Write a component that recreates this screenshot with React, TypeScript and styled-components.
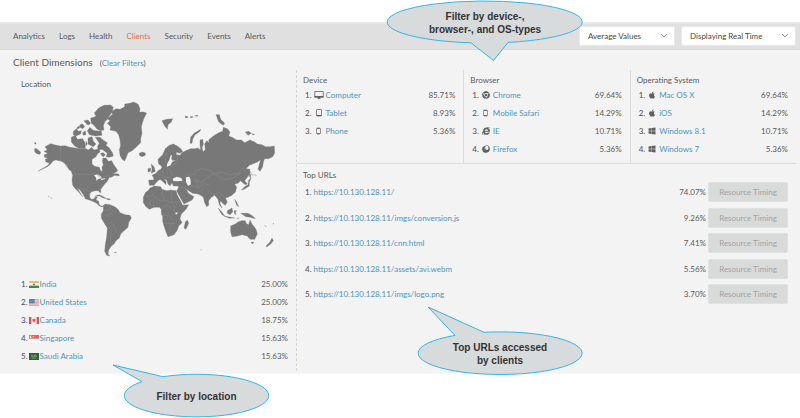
import React from "react";
import styled, { createGlobalStyle } from "styled-components";
import { FaApple, FaChrome, FaFirefox, FaInternetExplorer, FaWindows } from "react-icons/fa";

const GlobalStyle = createGlobalStyle`
  *, *::before, *::after { box-sizing: border-box; }
  body { margin: 0; background: #fff; color: #595b5d; font: 8px/12px Lato, "Liberation Sans", sans-serif; }
  ol, h1, h2, p { margin: 0; padding: 0; list-style: none; font-weight: 400; }
  button, select { font: inherit; }
`;

const Page = styled.div`
  position: relative;
  padding: 22px 0 44px;
`;

const Dashboard = styled.div`
  background: #f3f3f3;
  border-bottom: 1px solid #f9f9f9;
`;

const NavBar = styled.header`
  display: flex;
  align-items: center;
  justify-content: space-between;
  height: 28px;
  padding: 0 4px 2px 13px;
  background: #e0e0e0;
  border-top: 2px solid #e8e8e8;
  border-bottom: 1px solid #dadada;
`;

const NavLinks = styled.nav`
  display: flex;
  gap: 14px;
`;

const NavLink = styled.a<{ $active?: boolean }>`
  color: ${(p) => (p.$active ? "#f4694c" : "#595959")};
  text-decoration: none;
`;

const Filters = styled.div`
  display: flex;
  gap: 6px;
`;

const SelectWrap = styled.label<{ $width: number }>`
  display: grid;
  grid-template-columns: 1fr 14px;
  align-items: center;
  width: ${(p) => p.$width}px;
  height: 20px;
  background: #fff;
  border: 1px solid #e9e9e9;
  border-radius: 2px;
`;

const Select = styled.select`
  grid-area: 1 / 1 / 2 / 3;
  appearance: none;
  width: 100%;
  padding: 0 14px 0 8px;
  border: 0;
  background: transparent;
  color: #484848;
`;

const Chevron = styled.svg`
  grid-area: 1 / 2;
  width: 8px;
  height: 6px;
  justify-self: start;
  fill: none;
  stroke: #999;
  pointer-events: none;
`;

const TitleRow = styled.div`
  display: flex;
  align-items: baseline;
  gap: 7px;
  height: 20px;
  padding: 5px 13px 0;
`;

const Title = styled.h1`
  font-size: 10px;
  line-height: 14px;
`;

const Link = styled.a`
  color: #4f93b8;
  text-decoration: none;
`;

const Body = styled.main`
  display: grid;
  grid-template-columns: 37fr 63fr;
  padding-bottom: 2px;
`;

const LocationPanel = styled.section`
  padding: 8px 8px 6px 21px;
`;

const MapDrawing = styled.svg`
  display: block;
  width: 100%;
  height: auto;
  margin-bottom: 16px;
`;

const PanelTitle = styled.h2`
  font-size: 8px;
  line-height: 12px;
`;

const Details = styled.div`
  display: flex;
  flex-direction: column;
  border-left: 1px dashed #d4d4d4;
`;

const Dimensions = styled.div`
  display: grid;
  grid-template-columns: repeat(3, 1fr);
  margin-right: 4px;
  border-bottom: 1px solid #dcdcdc;
`;

const Dimension = styled.section`
  min-height: 93px;
  padding: 4px 8px 4px 6px;
  & + & { border-left: 1px solid #dcdcdc; }
`;

const ItemList = styled.ol<{ $indent?: boolean }>`
  padding-left: ${(p) => (p.$indent ? 2 : 0)}px;
`;

const Item = styled.li`
  display: flex;
  align-items: center;
  height: 18px;
`;

const Rank = styled.span`
  color: #4c4c4c;
`;

const IconBox = styled.span<{ $gap: number }>`
  display: flex;
  justify-content: center;
  width: 10px;
  margin: 0 ${(p) => p.$gap}px;
  color: #606060;
  & svg { display: block; }
`;

const Percent = styled.span`
  margin-left: auto;
`;

const TopUrls = styled.section`
  padding: 5px 12px 0 6px;
`;

const UrlList = styled.ol`
  display: flex;
  flex-direction: column;
  justify-content: space-between;
  min-height: 122px;
  padding: 0 0 0 2px;
  margin-top: 1px;
`;

const UrlItem = styled.li`
  display: flex;
  align-items: center;
  gap: 2px;
`;

const TimingButton = styled.button`
  width: 80px;
  height: 20px;
  padding: 0;
  border: 1px solid #dfe0e0;
  border-radius: 2px;
  background: #d9dbdb;
  color: #a0a2a2;
`;

const Callout = styled.aside<{ $x: number; $y: number; $w: number; $h: number }>`
  position: absolute;
  left: ${(p) => p.$x}px;
  top: ${(p) => p.$y}px;
  width: ${(p) => p.$w}px;
  height: ${(p) => p.$h}px;
  display: grid;
`;

const Bubble = styled.svg`
  grid-area: 1 / 1;
  width: 100%;
  height: 100%;
  overflow: visible;
  fill: #d7dbdc;
  stroke: #35b5e9;
`;

const CalloutText = styled.p<{ $top: number; $left?: number }>`
  grid-area: 1 / 1;
  z-index: 1;
  padding: ${(p) => p.$top}px 0 0 ${(p) => p.$left ?? 0}px;
  text-align: center;
  color: #333;
  font: bold 10px/13px "Liberation Sans", Arial, sans-serif;
`;

const Monitor = () => (
  <svg width="10" height="8" viewBox="0 0 20 16">
    <path d="M1.5 1h17v11h-17zM7 15h6" fill="none" stroke="currentColor" strokeWidth="1.6" />
    <path d="M1 10h18v3H1zM8 12h4v3H8z" fill="currentColor" />
  </svg>
);
const Tablet = () => (
  <svg width="6" height="8" viewBox="0 0 12 16">
    <rect x="1" y="1" width="10" height="13" rx="1" fill="none" stroke="currentColor" strokeWidth="1.5" />
    <path d="M1 12h10v2H1z" fill="currentColor" />
  </svg>
);
const Phone = () => (
  <svg width="5" height="8" viewBox="0 0 10 16">
    <rect x="1" y="2" width="8" height="12" rx="1.5" fill="none" stroke="currentColor" strokeWidth="1.3" />
    <path d="M2 3h6M2 13h6" stroke="currentColor" strokeWidth="1.6" />
  </svg>
);

const flags: Record<string, React.ReactNode> = {
  India: (
    <>
      <path d="M0 0h30v7H0z" fill="#f3bd62" />
      <path d="M0 7h30v7H0z" fill="#f4f4f0" />
      <path d="M0 14h30v7H0z" fill="#438a43" />
      <circle cx="15" cy="10.5" r="3" fill="#667ba0" />
    </>
  ),
  "United States": (
    <>
      <path d="M0 0h30v21H0z" fill="#f5dada" />
      <path d="M0 1.5h30M0 6h30M0 10.5h30M0 15h30M0 19.5h30" stroke="#dc8b86" strokeWidth="2" />
      <path d="M0 0h17v13H0z" fill="#4786bd" />
      <path d="M3 4h11M3 8h11" stroke="#a8cbe3" strokeDasharray="2 2" />
    </>
  ),
  Canada: (
    <>
      <path d="M0 0h30v21H0z" fill="#f8eeee" />
      <path d="M0 0h7v21H0zM23 0h7v21h-7zM15 4l2 3 3 0-1 5-3 2v3h-2v-3l-3-2-1-5h3z" fill="#dd5149" />
    </>
  ),
  Singapore: (
    <>
      <path d="M0 0h30v21H0z" fill="#fafafa" />
      <path d="M0 0h30v11H0z" fill="#e2625c" />
      <path d="M8 2a4 4 0 1 0 0 7 5 5 0 0 1 0-7M11 4h4v3h-4z" fill="#fae5e3" />
    </>
  ),
  "Saudi Arabia": (
    <>
      <path d="M0 0h30v21H0z" fill="#2d632c" />
      <path d="M7 5v5h4V6m2 4h4V5m3 0v5h4M8 15h14" fill="none" stroke="#c3d5bd" strokeWidth="1.5" />
    </>
  ),
};

const WorldMap = () => (
  <MapDrawing viewBox="3 0 801 507" role="img" aria-label="World map of clients">
    <g fill="#787878" stroke="#787878" strokeWidth="1">
      <path d="M75 170L92 161L106 165L121 168L135 167L150 172L165 174L180 177L195 175L205 180L215 172L222 180L232 178L236 170L240 186L232 192L228 200L216 208L216 222L224 229L238 232L242 243L247 244L246 232L250 224L247 214L249 204L258 204L265 214L275 212L280 222L290 236L293 243L284 248L276 250L296 252L298 258L284 256L274 262L268 262L262 274L254 282L248 290L242 298L243 308L238 306L236 302L226 302L214 305L209 312L209 322L214 328L222 327L226 320L232 320L228 330L236 334L237 342L242 348L250 348L247 351L238 348L230 340L218 334L208 330L196 326L190 314L180 300L172 294L180 308L188 320L184 316L174 304L166 296L158 286L156 270L158 256L154 244L146 238L140 226L130 216L118 212L108 210L100 212L92 222L82 230L66 238L54 244L70 234L84 226L88 219L78 216L76 208L84 204L74 202L72 194L82 192L80 188L72 184L82 180Z" />
      <path d="M44 175l6 1 12 10-2 7-10-2-6-6zM44 157l4 2 0 4-4-2zM223 69L236 54L252 46L272 45L280 52L276 66L268 78L262 88L254 96L250 108L252 120L240 122L230 116L222 106L214 100L212 84L222 82L228 78Z" />
      <path d="M262 100L270 92L262 86L278 72L272 66L288 56L300 58L314 50L314 42L330 40L340 36L354 42L360 56L358 66L372 66L380 70L372 84L368 96L364 110L366 130L362 146L362 158L348 172L336 182L324 188L318 204L314 213L306 208L300 196L298 180L302 166L300 150L296 134L288 124L270 120L272 110Z" />
      <path d="M226 142L240 142L252 152L262 158L258 166L268 174L278 190L280 198L268 202L258 200L262 190L246 178L238 180L232 170L238 160Z" />
      <path d="M154 142L166 136L172 148L188 146L196 160L196 174L178 176L164 168L154 156ZM160 124l10-8 4 8 10-2-2 10-14 6-8-4zM180 104l8-2 6 8-6 6-8-4zM192 92l12-2 8 10-8 6-6-6zM188 128l8-6 2 12-8 2zM202 122l8-10 8 8 8 2 18 2 2 12-20 2-18-4zM204 144l12-4 4 14 8 8-8 8-16-8zM242 190l8-2 6 6-6 6-6-4zM198 154l4 8-4 5zM170 114l8-7 2 4-6 7z" />
      <path d="M358 190L366 186L376 189L376 196L366 200L358 196ZM226 318L238 314L250 320L260 326L250 324L238 318ZM260 326l8 0 4 3-10 0zM92 322l3 4zM84 318l3 2z" />
      <path d="M250 346L256 342L270 344L284 350L294 358L300 368L316 374L330 376L334 384L326 398L324 412L312 422L302 432L298 444L288 452L282 462L274 468L266 480L264 492L270 498L260 496L254 484L256 464L260 440L262 414L252 398L244 384L244 372L250 362ZM283 487l6 0-3 2z" />
      <g transform="translate(360 0)">
        <path d="M30 294L44 288L62 290L66 298L80 302L92 300L108 302L112 316L122 334L128 346L146 344L138 358L124 372L120 386L126 398L116 408L112 420L102 434L84 440L78 426L72 408L68 394L68 380L64 372L64 358L58 352L42 352L28 358L18 350L10 338L10 322L16 308L26 300ZM136 396L142 390L146 400L138 418L132 414Z" />
        <path d="M26 270L42 270L40 262L36 256L48 250L54 242L62 238L66 232L62 226L56 222L54 208L68 194L76 176L88 166L100 162L112 168L124 178L128 186L118 190L110 186L108 194L120 196L126 188L134 184L142 180L152 176L164 176L174 174L182 180L180 164L180 150L188 148L190 162L186 174L190 186L196 178L194 162L200 152L208 158L206 150L220 138L236 128L248 124L250 112L262 116L270 126L266 138L276 142L290 150L304 150L314 158L330 150L344 156L352 162L366 164L376 170L390 170L403 168L404 190L398 200L386 206L374 206L370 216L368 230L360 244L354 238L358 222L362 210L352 216L338 222L328 226L318 236L330 238L330 250L322 262L314 272L322 282L316 284L308 278L302 272L294 280L284 282L290 292L286 306L276 316L264 322L256 324L262 336L256 346L250 342L242 332L240 340L246 354L238 344L234 328L224 316L214 322L206 332L206 346L200 350L194 338L190 322L182 316L174 312L158 310L146 302L138 296L144 308L152 314L162 320L156 330L132 342L126 332L118 318L110 302L114 296L116 288L100 288L96 278L90 288L84 282L80 270L72 266L78 274L78 284L70 276L60 268L52 274L42 286L28 286Z" />
        <path d="M34 222L42 230L46 244L34 250L36 238ZM24 236L32 234L32 244L24 246ZM66 92L80 88L98 86L94 96L84 104L82 118L74 108ZM150 160L152 142L162 130L182 118L180 124L164 136L158 148L156 160ZM228 74L238 74L242 88L254 100L250 106L236 96ZM136 78l8 2-2 4-6-1zM152 79l8 2-8 3zM164 78l10-3-2 4zM316 126l10-2 8 6-10 6zM336 131l8 2-5 2z" />
        <path d="M326 270L334 264L328 276L328 288L312 298L304 300L314 290L324 284ZM328 250l4 4 0 10-4-4zM234 354L244 364L254 378L246 374ZM252 378L272 382L284 384L268 385ZM262 362L276 354L278 366L270 374L262 370ZM284 328l6 8 6 14-6-4zM282 362l8 0-4 4 2 8-4-2zM302 370L324 370L338 378L346 386L330 382L318 380ZM298 384l-8 3zM374 406l5 5zM398 402l4-2z" />
        <path d="M272 408L286 402L294 396L304 392L316 392L318 400L326 404L330 390L336 402L348 418L352 432L344 448L330 448L322 438L306 434L292 438L276 440L272 426ZM334 456l7 0-2 5-4-1zM396 444L400 452L392 462L380 471L378 468L390 456ZM182 479l3 1z" />
      </g>
    </g>
    <g fill="#f3f3f3" transform="translate(360 0)">
      <path d="M98 266L110 260L124 264L128 272L112 274L100 273ZM138 262L148 260L152 270L152 284L144 287L138 276ZM88 210L92 196L96 196L94 206L98 212L108 210L96 216L92 226L80 230L82 220ZM106 368l6-2 0 7-5 0z" />
      <path d="M-138 256l10-3 8 4 8 8-14 2-4 6-3-12zM-116 268l12-4-2 4-12 3z" />
    </g>
    <g fill="none" stroke="#8c8c8c" strokeWidth="1.5">
      <path d="M121 168v43l14 10 6 12M158 253h72l12 10 28-8M172 296l24 2 18 10M254 378l18-6 10-10 8 0M264 400l12-2 8 10 4 16M266 410l8 10-4 38M272 346l-2 12-14 4" />
      <path transform="translate(360 0)" d="M18 322l20-6 22 18 14-4 22 8 22-4M66 298l4 30M94 302v32M28 350l4-18M40 350v-18M66 354l14-8 14 8M66 376l20 0 12 14M74 400h26M90 440v-34l14-8M124 372l-20-8-4-20M112 342l-8 14M50 250l20 12 16 0 12 4M58 240l12 6-4 14M78 232l14 8 4 18M92 230l12-4 8-16 0-20M76 222l0-18 12-28M138 260l8-6 18 0 2-12 20-6 20 4 20 12 20-6 20 8 30-4 10-16 20 4 10 16 14 2M152 284l24 10 16-14 20 8M160 266l24 12 18-16 20-12M224 252l24 18 30-6 24-14M190 294l-10 14M202 300l18 14 18-6 12 12M130 290l14 14M118 292l20 4M166 268l10 24" />
    </g>
  </MapDrawing>
);

type Row = { name: string; value: string; icon: React.ReactNode };

const dimensions: { title: string; rows: Row[] }[] = [
  {
    title: "Device",
    rows: [
      { name: "Computer", value: "85.71%", icon: <Monitor /> },
      { name: "Tablet", value: "8.93%", icon: <Tablet /> },
      { name: "Phone", value: "5.36%", icon: <Phone /> },
    ],
  },
  {
    title: "Browser",
    rows: [
      { name: "Chrome", value: "69.64%", icon: <FaChrome size={8} /> },
      { name: "Mobile Safari", value: "14.29%", icon: <Phone /> },
      { name: "IE", value: "10.71%", icon: <FaInternetExplorer size={8} /> },
      { name: "Firefox", value: "5.36%", icon: <FaFirefox size={8} /> },
    ],
  },
  {
    title: "Operating System",
    rows: [
      { name: "Mac OS X", value: "69.64%", icon: <FaApple size={8} /> },
      { name: "iOS", value: "14.29%", icon: <FaApple size={8} /> },
      { name: "Windows 8.1", value: "10.71%", icon: <FaWindows size={8} /> },
      { name: "Windows 7", value: "5.36%", icon: <FaWindows size={8} /> },
    ],
  },
];

const locations = [
  ["India", "25.00%"],
  ["United States", "25.00%"],
  ["Canada", "18.75%"],
  ["Singapore", "15.63%"],
  ["Saudi Arabia", "15.63%"],
];

const urls = [
  ["https://10.130.128.11/", "74.07%"],
  ["https://10.130.128.11/imgs/conversion.js", "9.26%"],
  ["https://10.130.128.11/cnn.html", "7.41%"],
  ["https://10.130.128.11/assets/avi.webm", "5.56%"],
  ["https://10.130.128.11/imgs/logo.png", "3.70%"],
];

const sections = ["Analytics", "Logs", "Health", "Clients", "Security", "Events", "Alerts"];

const Dropdown = ({ label, width }: { label: string; width: number }) => (
  <SelectWrap $width={width}>
    <Select aria-label={label}>
      <option>{label}</option>
    </Select>
    <Chevron viewBox="0 0 8 6">
      <path d="M1 1l3 3 3-3" />
    </Chevron>
  </SelectWrap>
);

export default function App() {
  return (
    <Page>
      <GlobalStyle />
      <Dashboard>
        <NavBar>
          <NavLinks>
            {sections.map((s) => (
              <NavLink key={s} href="#" $active={s === "Clients"}>{s}</NavLink>
            ))}
          </NavLinks>
          <Filters>
            <Dropdown label="Average Values" width={96} />
            <Dropdown label="Displaying Real Time" width={115} />
          </Filters>
        </NavBar>
        <TitleRow>
          <Title>Client Dimensions</Title>
          <span>(<Link href="#">Clear Filters</Link>)</span>
        </TitleRow>
        <Body>
          <LocationPanel>
            <PanelTitle>Location</PanelTitle>
            <WorldMap />
            <ItemList>
              {locations.map(([name, value], i) => (
                <Item key={name}>
                  <Rank>{i + 1}.</Rank>
                  <IconBox $gap={1}>
                    <svg width="10" height="7" viewBox="0 0 30 21">{flags[name]}</svg>
                  </IconBox>
                  <Link href="#">{name}</Link>
                  <Percent>{value}</Percent>
                </Item>
              ))}
            </ItemList>
          </LocationPanel>
          <Details>
            <Dimensions>
              {dimensions.map((d) => (
                <Dimension key={d.title}>
                  <PanelTitle>{d.title}</PanelTitle>
                  <ItemList $indent>
                    {d.rows.map((r, i) => (
                      <Item key={r.name}>
                        <Rank>{i + 1}.</Rank>
                        <IconBox $gap={2}>{r.icon}</IconBox>
                        <Link href="#">{r.name}</Link>
                        <Percent>{r.value}</Percent>
                      </Item>
                    ))}
                  </ItemList>
                </Dimension>
              ))}
            </Dimensions>
            <TopUrls>
              <PanelTitle>Top URLs</PanelTitle>
              <UrlList>
                {urls.map(([url, value], i) => (
                  <UrlItem key={url}>
                    <Rank>{i + 1}.</Rank>
                    <Link href="#">{url}</Link>
                    <Percent>{value}</Percent>
                    <TimingButton type="button">Resource Timing</TimingButton>
                  </UrlItem>
                ))}
              </UrlList>
            </TopUrls>
          </Details>
        </Body>
      </Dashboard>

      <Callout $x={387} $y={1} $w={196} $h={61}>
        <Bubble viewBox="387 1 196 61">
          <path d="M508 42.4A97.5 21 0 1 0 471 42.8L493.5 60.5Z" />
        </Bubble>
        <CalloutText $top={9}>Filter by device-,<br />browser-, and OS-types</CalloutText>
      </Callout>
      <Callout $x={418} $y={306} $w={164} $h={69}>
        <Bubble viewBox="418 306 164 69">
          <path d="M484 332.3A82 21.3 0 1 1 455 335.4L428 307Z" />
        </Bubble>
        <CalloutText $top={35}>Top URLs accessed<br />by clients</CalloutText>
      </Callout>
      <Callout $x={112} $y={364} $w={158} $h={54}>
        <Bubble viewBox="112 364 158 54">
          <path d="M163 376.7A72.2 21.3 0 1 1 142 381.6L113 365Z" />
        </Bubble>
        <CalloutText $top={26} $left={11}>Filter by location</CalloutText>
      </Callout>
    </Page>
  );
}
